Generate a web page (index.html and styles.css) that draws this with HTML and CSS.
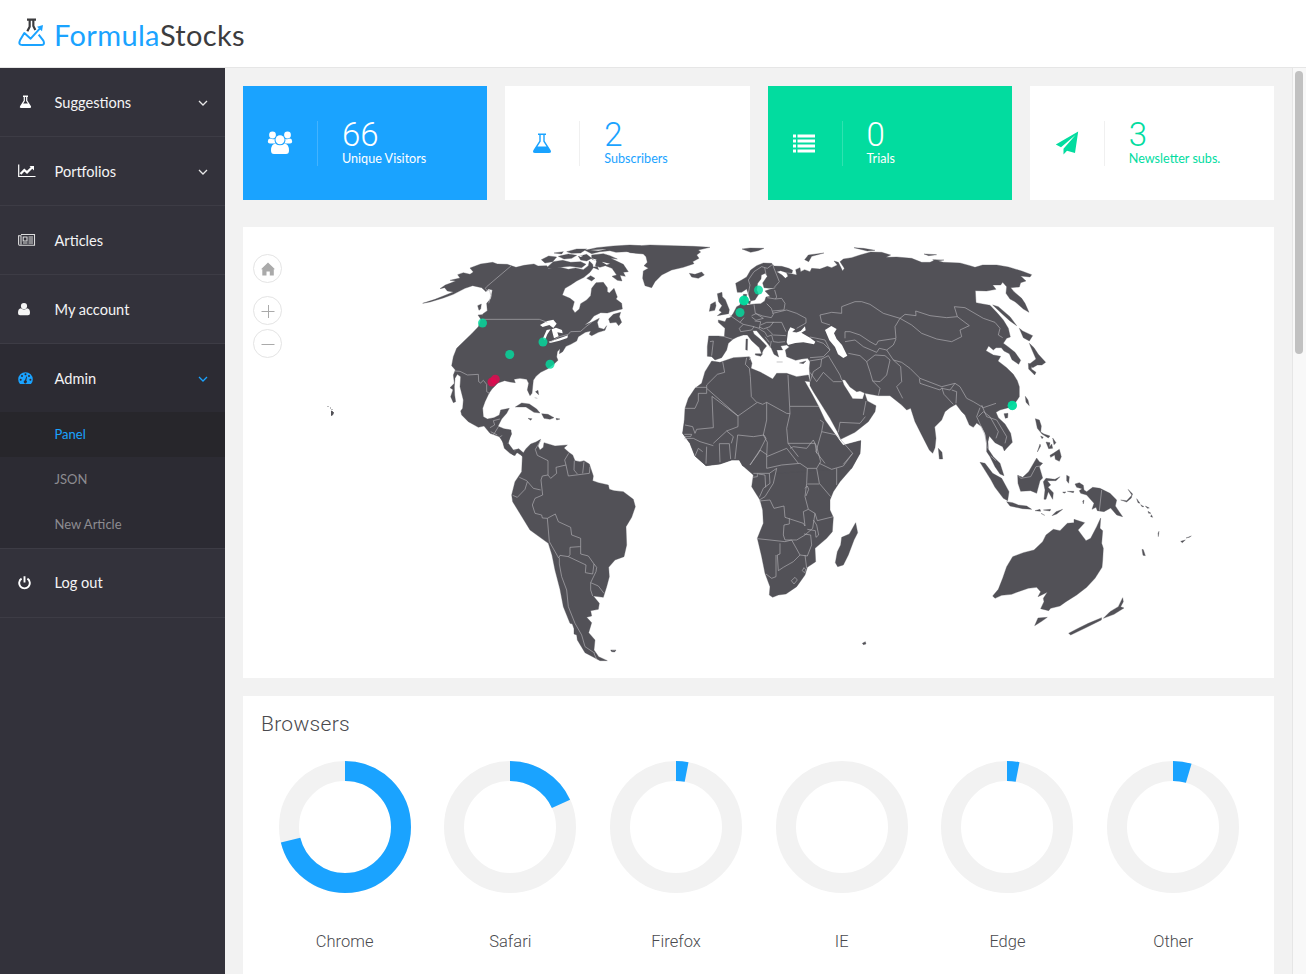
FILE: index.html
```html
<!DOCTYPE html>
<html lang="en">
<head>
<meta charset="utf-8">
<title>FormulaStocks</title>
<link rel="stylesheet" href="styles.css">
</head>
<body>
<header class="topbar">
  <svg class="logo-mark" width="28" height="30" viewBox="54 54 84 90" fill="none" stroke-linejoin="round">
    <path d="M81 59H108M89 59V80L82 94M100 59V78L106 90" stroke="#3c3c3e" stroke-width="6.500"/>
    <path d="M116 104L130 122Q136 135 123 135H67Q54 135 60 121L73 99L92 116L122 83" stroke="#1aa3ff" stroke-width="6"/>
    <path d="M111 80L129 75L126 94Z" fill="#1aa3ff"/>
  </svg>
  <div class="logo-text"><span class="logo-a">Formula</span><span class="logo-b">Stocks</span></div>
</header>
<div class="shell">
  <nav class="sidebar">
    <a class="item"><span class="ico"><svg width="16" height="16" viewBox="0 0 16 16"><path d="M5 1.500h5v1.500H9.300v3.600L13 12.300Q13.600 14 12 14H3Q1.200 14 2 12.300L5.700 6.600V3H5zM6.900 3v4L5.200 9.600h4.700L8.100 7V3z" fill="#fff" fill-rule="evenodd"/></svg></span><span class="name">Suggestions</span><svg class="chev" width="10" height="6" viewBox="0 0 10 6"><path d="M1 1l4 4 4-4"/></svg></a>
    <a class="item"><span class="ico"><svg width="18" height="16" viewBox="0 0 18 16" fill="none"><path d="M.7 1.500V13.500H17.500" stroke="#fff" stroke-width="1.200"/><path d="M2.500 11L6.300 7L9 9.400L14 4.500" stroke="#fff" stroke-width="2.200"/><path d="M11.500 3H16V7.500z" fill="#fff"/></svg></span><span class="name">Portfolios</span><svg class="chev" width="10" height="6" viewBox="0 0 10 6"><path d="M1 1l4 4 4-4"/></svg></a>
    <a class="item"><span class="ico"><svg width="18" height="14" viewBox="0 0 18 14" fill="none" stroke="#ddd"><path d="M3 1.500H16.500V12.200H1.500Q.6 12.200.6 11V2.800H3V11.500" stroke-width="1.100"/><path d="M5.200 4H9V8H5.200zM10.500 4H15M10.500 6H15M10.500 8H15M5 10H9.500M10.500 10H15" stroke-width="1.100"/></svg></span><span class="name">Articles</span></a>
    <a class="item"><span class="ico"><svg width="14" height="16" viewBox="0 0 14 16" fill="#f5f5f5"><circle cx="6" cy="5" r="3.100"/><path d="M3 7.200Q6 9.800 9 7.200Q12 7.500 12 12Q12 14.300 10 14.300H2Q0 14.300 0 12Q0 7.500 3 7.200z"/></svg></span><span class="name">My account</span></a>
    <a class="item open"><span class="ico"><svg width="16" height="16" viewBox="0 0 16 16"><path d="M2 14Q.2 12 .2 9.500A7.300 7.300 0 0 1 14.800 9.500Q14.800 12 13 14z" fill="#1aa3ff"/><g fill="#2c2b33"><circle cx="2.700" cy="9.800" r="1"/><circle cx="4" cy="6" r="1"/><circle cx="7.500" cy="4.300" r="1"/><circle cx="11" cy="6" r="1"/><circle cx="12.400" cy="9.800" r="1"/><path d="M8.300 6.500L9 6.700L8.300 10.500A1.600 1.600 0 1 1 7 10.200z"/></g></svg></span><span class="name">Admin</span><svg class="chev on" width="10" height="6" viewBox="0 0 10 6"><path d="M1 1l4 4 4-4"/></svg></a>
    <div class="submenu">
      <a class="sub current">Panel</a>
      <a class="sub">JSON</a>
      <a class="sub">New Article</a>
    </div>
    <a class="item after"><span class="ico"><svg width="14" height="16" viewBox="0 0 14 16" fill="none" stroke="#fff" stroke-width="1.900"><path d="M3.600 3.600A5.300 5.300 0 1 0 9.400 3.600M6.500 1.300V7.500"/></svg></span><span class="name">Log out</span></a>
  </nav>
  <main class="content">
    <section class="cards">
      <article class="card blue">
        <div class="card-icon"><svg width="26" height="26" viewBox="0 0 26 26" fill="#fff"><circle cx="5.500" cy="5" r="3.400"/><circle cx="20.500" cy="5" r="3.400"/><path d="M3 8.500Q6 10 8 8.800Q7 12 9 13.500H3Q.8 13.500.8 11.500Q1 8.700 3 8.500zM23 8.500Q20 10 18 8.800Q19 12 17 13.500H23Q25.200 13.500 25.200 11.500Q25 8.700 23 8.500z"/><circle cx="13" cy="9.700" r="5.300" fill="#1aa3ff"/><circle cx="13" cy="9.700" r="4.500"/><path d="M8.500 13.700Q13 17 17.500 13.700Q22 14 22 20.500Q22 24 19 24H7Q4 24 4 20.500Q4 14 8.500 13.700z"/></svg></div>
        <div class="card-body"><div class="num">66</div><div class="lbl">Unique Visitors</div></div>
      </article>
      <article class="card white-blue">
        <div class="card-icon"><svg width="20" height="22" viewBox="0 0 20 22"><path d="M6 1.500h8v1.500h-1.300v6L18.500 18Q20 21 17 21H3Q0 21 1.500 18L7.300 9V3H6zM8.700 3v6.500L5.500 14.500h9L11.300 9.500V3z" fill="#1aa3ff" fill-rule="evenodd"/></svg></div>
        <div class="card-body"><div class="num">2</div><div class="lbl">Subscribers</div></div>
      </article>
      <article class="card green">
        <div class="card-icon"><svg width="23" height="19" viewBox="0 0 23 19" fill="#fff"><path d="M0 .500h3v3h-3zM4.500 .500h17.500v3h-17.500zM0 5.600h3v3h-3zM4.500 5.600h17.500v3h-17.500zM0 10.600h3v3h-3zM4.500 10.600h17.500v3h-17.500zM0 15.600h3v3h-3zM4.500 15.600h17.500v3h-17.500z"/></svg></div>
        <div class="card-body"><div class="num">0</div><div class="lbl">Trials</div></div>
      </article>
      <article class="card white-green">
        <div class="card-icon"><svg width="24" height="24" viewBox="0 0 24 24" fill="#02dc9f"><path d="M23.200.500L.8 13.500L6 16.200L20.500 4L8.500 17.800V23.500L12 19.800L20 22z"/></svg></div>
        <div class="card-body"><div class="num">3</div><div class="lbl">Newsletter subs.</div></div>
      </article>
    </section>

    <section class="map">
      <svg class="world" width="1031" height="451" viewBox="243 227 1031 451">
        <!-- North America -->
        <g transform="translate(410 235) scale(.33333)">
          <path class="land" d="M38 205L75 193L100 183L130 171L112 168L104 158L90 161L106 150L120 145L137 138L120 136L150 129L143 119L160 113L180 118L190 111L180 99L212 87L248 82L262 87L292 88L318 97L342 91L372 87L384 93L410 92L416 101L450 97L475 103L497 99L520 104L535 92L538 78L548 88L550 98L540 112L522 127L500 138L482 150L465 160L457 180L480 190L493 200L487 222L495 233L508 222L512 206L530 195L542 182L545 160L558 143L580 142L592 158L592 170L598 174L612 160L622 186L618 192L635 205L637 222L612 228L592 234L572 233L552 243L540 258L524 270L548 260L568 250L562 262L566 278L582 283L590 272L585 286L565 292L545 302L538 298L542 288L526 292L505 305L500 318L482 328L468 334L458 350L448 356L450 341L442 350L440 366L444 376L432 387L412 402L392 412L378 424L370 436L368 455L366 475L360 482L352 465L356 445L350 433L330 430L312 433L316 443L300 441L284 437L264 444L246 462L237 475L225 500L218 520L220 545L232 552L252 548L268 540L272 525L298 520L290 535L275 552L264 574L282 581L303 585L300 605L295 625L310 645L325 642L342 658L338 664L320 652L315 662L300 655L283 640L278 620L268 605L240 595L222 573L205 577L175 560L155 540L152 528L158 520L160 495L150 455L152 425L142 418L135 430L133 455L134 480L137 500L130 503L122 485L129 464L120 458L133 445L130 420L136 405L125 392L130 365L140 340L160 320L185 296L205 275L213 252L218 237L232 227L230 205L243 190L247 165L235 162L228 170L215 158L188 152L165 160L130 178L100 189L60 201Z"/>
          <path class="land" d="M203 212L214 207L212 222L207 226ZM204 240L216 239L222 258L212 252ZM596 252L610 238L632 232L628 245L635 262L626 272L618 262L600 264ZM376 470L384 466L386 480M374 488L382 490M316 516L335 504L358 507L380 522L390 534L372 532L348 516ZM395 536L414 538L432 548L420 553L402 550ZM354 550L366 551L362 556ZM438 550L450 552L440 555Z"/>
          <path class="land" d="M394 74L416 63L440 66L428 80L405 84ZM410 98L430 80L458 76L482 82L512 80L528 88L515 98L480 94L450 97L430 103ZM432 54L460 50L455 57ZM445 64L475 57L500 61L485 70L462 72ZM470 50L500 42L530 42L512 54L484 55ZM505 64L530 58L545 70L530 78L512 75ZM525 46L560 38L610 33L660 30L692 32L692 38L650 40L692 46L692 54L650 50L618 52L600 47L570 50L545 56ZM545 60L580 56L600 62L622 72L602 70L640 88L655 110L640 112L646 124L630 121L636 138L622 136L606 124L620 120L606 100L586 92L570 97L556 92L560 78L545 72ZM548 97L562 94L566 104ZM530 130L542 122L555 130L545 138ZM660 42L690 44L690 54L675 54Z"/>
          <path class="water" d="M390 270L412 258L430 254L440 266L430 279L418 270L398 276ZM399 310L410 285L422 283L412 298L405 316ZM425 283L438 278L456 285L458 295L442 292L446 304L432 310L428 295ZM416 320L440 313L474 301L472 309L448 317L420 324ZM545 70L560 74L556 78ZM575 80L600 86L590 89ZM500 60L520 62L512 66ZM540 45L590 43L565 47ZM575 105L600 110L585 122L570 118Z"/>
          <path class="border" d="M304 92L230 155L226 160L232 168L238 164L243 182L236 205M216 253H388L412 262M420 322L448 305L475 298L482 290L512 289L528 275L545 262M134 408L150 409L172 420L205 418L206 440L212 444L220 436L230 448L230 470L240 476M270 552L250 557L254 570L240 578M250 600L266 574M270 605L300 590M280 625L294 626M242 590L262 600M312 655L316 645"/>
        </g>
        <!-- Southern Africa coast, under the continental borders -->
        <g transform="translate(670 400) scale(.33333)">
          <path class="land" d="M45 60L38 100L60 130L75 168L108 197L150 192L185 180L208 180L218 198L245 200L250 225L245 260L270 300L278 330L280 370L262 415L275 470L285 520L300 560L298 585L308 592L325 585L348 582L380 560L405 525L412 502L437 485L435 445L470 415L487 395L490 352L480 330L480 300L490 275L510 245L545 205L570 160L572 122L520 136L460 60Z"/>
          <path class="land" d="M557 368L563 398L552 420L535 465L520 495L503 500L496 488L502 455L512 435L515 412L538 402ZM577 730L586 725L588 732L580 734Z"/>
        </g>
        <!-- Europe, Asia and northern Africa -->
        <g transform="translate(630 235) scale(.33333)">
          <path class="land" d="M-20 33L30 32L60 30L130 32L190 34L240 37L205 45L212 51L200 60L207 70L188 80L192 86L160 97L125 105L95 120L75 140L65 158L45 152L38 130L40 108L55 100L42 92L52 82L48 65L40 57L0 53L-12 47Z"/>
          <path class="land" d="M178 115L195 118L215 111L223 120L205 130L185 126ZM262 176L276 172L277 185L286 194L298 224L296 236L262 242L275 232L267 226L276 212L266 200ZM242 208L256 200L258 212L254 226L238 229ZM336 42L360 39L402 40L384 47L362 52ZM524 74L535 60L582 54L545 64L536 80ZM672 38L700 40L735 46L712 48ZM882 57L920 59L896 62ZM908 74L942 75L915 79ZM348 312L353 312L352 346L347 344ZM376 356L398 356L392 364L376 360ZM440 381H458M508 384L528 378L520 386ZM340 178L350 178L348 200L340 196ZM354 198L362 198L360 207L354 205Z"/>
          <path class="land" d="M265 255L285 260L290 250L300 248L310 235L320 215L330 210L334 192L344 198L352 210L372 207L392 206L404 198L408 186L420 184L405 168L420 163L440 158L418 160L402 158L398 144L412 124L406 115L394 120L393 132L383 145L380 165L386 178L375 195L362 198L356 180L350 162L335 172L322 172L317 145L335 135L350 126L362 105L380 92L400 84L425 85L432 93L455 94L476 100L488 106L486 114L470 113L452 107L440 110L456 120L466 130L474 124L470 114L484 116L500 120L497 104L510 98L512 110L524 104L540 110L545 100L570 102L592 94L605 98L622 90L612 78L625 82L638 108L643 100L630 80L640 72L665 68L690 60L722 51L755 52L782 60L768 67L800 66L845 70L875 82L900 82L915 75L940 82L990 84L1020 92L1035 97L1058 90L1100 90L1135 96L1175 108L1205 119L1200 126L1172 123L1188 138L1172 143L1168 156L1142 158L1152 170L1175 190L1185 205L1197 232L1180 222L1155 200L1140 192L1128 175L1130 155L1118 142L1112 150L1088 150L1098 163L1070 168L1036 167L1038 203L1058 207L1080 211L1100 232L1120 255L1135 280L1141 306L1130 310L1120 325L1134 335L1155 352L1172 376L1166 388L1146 374L1138 356L1122 348L1114 338L1098 338L1090 345L1076 333L1068 347L1090 360L1112 364L1104 378L1130 398L1150 418L1162 437L1168 455L1168 485L1158 500L1135 518L1110 525L1098 532L1105 548L1125 567L1142 595L1147 622L1130 640L1123 648L1118 635L1095 623L1078 603L1074 620L1075 643L1090 665L1110 685L1122 722L1110 717L1095 695L1080 665L1070 650L1070 625L1065 595L1055 575L1040 564L1030 577L1018 570L1005 540L995 530L978 508L960 518L945 530L935 555L914 576L918 610L915 638L908 655L898 645L875 600L855 560L842 520L830 525L815 510L800 498L780 482L745 482L705 475L690 468L680 470L660 456L645 435L636 434L642 450L656 472L668 491L698 492L704 474L712 498L738 512L735 530L715 560L675 592L632 613L622 590L600 550L575 510L550 470L540 452L540 430L538 400L540 380L533 370L515 372L497 376L470 365L466 345L478 336L470 330L452 333L458 345L440 345L446 366L432 358L424 340L410 322L395 305L380 287L368 287L372 297L390 312L410 333L400 345L395 357L388 338L365 317L352 300L340 300L322 306L310 312L295 325L290 345L275 368L255 375L245 365L232 364L232 335L236 303L265 303L283 305L285 280L265 262Z"/>
          <path class="water" d="M470 322L474 290L481 277L494 282L500 291L512 288L525 274L527 286L514 293L540 308L556 320L552 328L520 322L496 324L474 330ZM585 285L604 273L620 282L612 295L620 312L636 330L652 362L640 369L624 358L615 336L598 316Z"/>
          <path class="land" d="M488 290L500 280L508 288L500 292ZM1088 210L1105 215L1140 245L1160 272L1140 258L1120 240ZM1168 280L1178 288L1208 302L1198 318L1180 308ZM1198 325L1212 338L1225 358L1247 382L1236 390L1222 390L1208 398L1200 386L1218 372L1204 340ZM1195 385L1206 388L1204 402L1218 412L1214 420L1196 402ZM925 640L936 652L938 672L928 672ZM1186 484L1194 495L1198 512L1188 502ZM1122 536L1134 535L1133 548L1126 550Z"/>
          <path class="land" d="M245 378L270 382L310 368L358 365L366 385L363 400L392 412L428 432L440 415L470 415L500 425L535 420L540 440L524 438L545 475L565 512L585 555L610 590L624 610L636 632L692 617L690 655L665 700L370 720L338 692L328 675L305 675L270 687L228 692L195 663L180 625L158 595L163 555L165 520L175 490L195 460L215 445L225 410Z"/>
          <path class="border" d="M354 180L360 150L355 135L372 110L395 95L412 100L428 88L432 100L448 140L432 158M404 98L408 118M372 208L376 235L398 243L424 248L430 238L424 220L410 206M412 188L436 192L440 186L434 165M436 192L455 190L465 205L462 225L428 228M428 235L470 225L500 235L528 250V264L500 280M298 240L330 262L342 248M330 262L340 268L328 280L332 290L365 285L372 275L340 268M365 242L378 236L400 250L378 256L365 246M374 258L392 260L388 280L370 275M392 270L410 262L430 262L420 275L400 282L388 276M428 262L455 262L468 290M410 280L430 300L468 302M388 282L405 292L412 305L425 300L430 320L445 322L465 320M424 318L420 338M405 305L418 322M283 305L308 313M240 320L250 318L245 362M362 366L358 375M350 368L346 388L358 400L361 425L364 485L380 502M278 380L284 412L262 418L230 450V460L324 543L382 502L398 508L410 502L470 535L480 536L474 420M230 457H196M230 460V475H205V498L195 520H165M246 484L250 578L200 583L195 595M246 484L324 543V575L290 588L250 625M410 502V555L400 600L412 622L410 665M480 514H568M480 536L470 580L474 625L505 665M323 600L370 605L402 600L408 610L385 655L360 690M323 600L315 672M290 588L310 605L304 625M268 626H298L302 672M268 626L270 682M230 635L228 686M195 595L188 575L165 570M163 598H185L182 605H163M163 611L190 610L210 620L250 632M195 663L205 640L218 650M575 590L580 562L570 555M575 590L558 650L585 685M575 590L620 600L668 655L640 688M474 625L555 625L560 655M538 378L575 372L572 395L550 410L540 440M540 412L560 440L580 412L610 440L635 440M575 372L595 362L630 420L635 435M625 592L630 562L690 565L706 545M700 540L708 498M540 368L580 365L600 345L580 325L560 318M540 306L585 315L600 345M570 240L605 232L635 235L635 215L675 200L695 200L720 208L760 235L810 250L825 238L858 242L857 228L900 242L950 248L982 245L973 215L1005 218L1060 250L1095 262L1110 280L1105 300L1118 308M810 250L845 270L875 295L920 312L965 320L995 305L990 285L1018 272L982 245M810 250L795 275L798 310L745 318L738 330L720 320L690 300L660 290L645 290L645 310M570 240L575 262L600 270M645 320L675 315L700 335L740 352L748 340L770 345L790 330L798 312M655 355L690 362L710 380L735 360L765 362L780 375L770 420L750 440L728 438L720 410L710 380M728 438L750 460L745 482M770 345L790 375L815 382L840 400L870 430L935 455L975 445L990 455L1010 490L1030 500L1060 518L1098 505M790 375L812 395L815 440L800 455L818 490M868 430L870 445L930 465L936 458M936 460L942 478L970 508M965 465L980 470L978 505M935 460L960 465L975 445M1050 518L1040 545L1065 600L1072 640M1055 510L1070 545L1100 555L1130 605L1125 625M1045 545L1060 530L1080 545L1105 590L1098 610"/>
        </g>
        <!-- Central and southern Africa borders -->
        <g transform="translate(670 400) scale(.33333)">
          <path class="border" d="M250 220H298L320 205M298 220L300 250L280 265L268 292M320 205L310 250L285 290L268 300M268 303L300 300L312 325L342 318L345 352L400 370L405 378L400 335L415 328L405 290L410 250L412 205L390 190L335 195L290 205L290 170L350 145L385 190M360 145L370 140L410 145L430 120L440 140L452 185L440 205L412 205M440 205L448 250L482 290M412 252L448 252M448 190L485 208L520 198L548 160M500 205V255M415 328L435 340L442 362L490 350M435 340L428 385L405 405L380 420L345 420L340 405L342 375L358 372V355M430 360L440 375L446 405L438 412L436 392L412 388M262 416L300 420L345 425L365 420L390 465L370 485L340 502L325 512L322 465L330 462V430M318 530V465M288 522L305 535L318 530M390 465L412 468L425 435L422 405L402 402M405 465L410 505M397 512L402 503L408 510L403 518ZM364 542L375 532L382 540L372 552ZM405 265L412 258L416 268L408 288M248 232L262 230V220M265 222L285 225L287 262M270 150L292 165M240 195L270 150"/>
        </g>
        <!-- South America -->
        <g transform="translate(480 430) scale(.33333)">
          <path class="land" d="M92 0L95 12L82 40L100 66L116 56L130 68L138 56L152 42L168 36L182 28L174 48L180 60L190 52L192 38L225 48L262 45L252 54L268 68L278 75L285 92L300 95L312 92L328 102L340 138L338 152L355 158L385 165L388 178L402 182L430 185L460 208L466 230L455 262L438 290L440 345L432 380L405 390L386 412L388 440L380 470L370 502L340 498L358 520L355 538L332 542L335 558L320 562L335 578L326 608L345 630L342 660L356 680L382 692L360 692L345 684L315 668L292 630L290 615L282 612L282 596L277 582L270 580L250 530L240 478L225 420L216 375L205 340L150 300L98 215L95 195L105 155L125 125L127 80L118 64L100 76L75 52L66 30L68 0ZM392 660L408 660L404 666L395 665Z"/>
          <path class="border" d="M182 32L166 58L172 76L204 92V135L212 145L230 130L228 112L258 105L254 90L266 70M258 105L265 138L328 130M283 92L282 120L292 132M312 95L308 130M328 130L330 110M204 135L187 138L183 150L188 195L165 205L157 225L165 250L185 255L187 264L202 265L205 300L208 335L236 384L240 376L265 380L270 374V352L298 350L302 350V325L275 315L272 292L235 275L226 252L202 265M118 142L140 152L160 175L182 180M142 155L135 178L112 202L98 196M265 380L318 405L316 428L338 432L342 402L325 378L302 372V350M238 384V402L245 440L260 480L265 530L285 580L305 615L315 650L345 670M342 402L350 412L348 425L332 458V480L338 498M332 458L355 468L372 490M342 670L350 688"/>
        </g>
        <!-- South-east Asia and Oceania -->
        <g transform="translate(960 400) scale(.33333)">
          <path class="land" d="M60 187L75 190L98 220L125 235L147 275L143 302L130 295L105 262L92 238ZM140 305L158 308L175 315L200 318L215 328L188 326L150 318ZM225 332L240 328L242 334ZM250 330L272 328L270 333ZM243 340L254 346ZM276 347L288 335L308 328L290 342ZM173 226L188 232L206 215L230 174L238 185L248 190L238 200L248 234L240 242L230 280L212 272L182 274L174 250ZM250 245L258 235L285 238L300 230L288 242L262 242L272 255L264 262L280 278L278 298L265 275L258 298L252 298L255 270ZM320 226L328 230L326 250L320 242ZM308 276H318L312 280ZM322 274L342 274L340 278ZM368 303L372 300L370 312ZM226 56L238 60L244 78L242 96L252 102L270 108L265 114L246 102L232 85ZM242 108L250 112L246 116ZM258 126L270 128L268 142L275 132L278 145L266 146ZM278 114L288 128L282 134ZM270 166L280 160L298 148L304 170L298 184L286 178L284 165L272 172ZM240 132L242 138L232 156ZM345 252L358 248L370 256L372 270L380 275L398 262L420 265L450 280L470 300L466 318L478 336L488 350L470 345L452 324L432 335L412 332L408 322L396 328L402 310L380 285L362 280L358 272L366 266L350 262ZM482 300L500 302L516 285L514 294L500 306ZM504 268L518 282L516 286ZM530 296L540 310L534 308ZM542 314L552 320L546 320ZM556 318L568 324L562 325ZM564 334L573 340L566 340ZM574 344L578 352L572 350Z"/>
          <path class="land" d="M422 354L420 385L428 392L425 430L430 445L428 480L426 502L405 535L380 562L350 585L318 605L300 618L272 625L266 632L242 626L252 605L250 595L262 577L234 590L242 575L230 562L205 565L175 575L155 583L125 586L105 595L98 588L115 568L128 535L140 500L158 470L190 458L222 450L248 425L258 405L280 388L300 392L322 370L342 368L342 358L374 368L354 390L378 422L392 415L410 380ZM234 654L262 652L245 664L224 677ZM326 700L352 686L385 670L425 653L424 660L380 682L332 705ZM430 655L450 635L475 620L488 593L490 605L482 620L492 624L462 643ZM546 448L550 449L556 467L549 466ZM594 400L597 394L595 410ZM662 424L676 420L667 428ZM678 414L694 408L688 412Z"/>
          <path class="border" d="M176 228L182 235L212 230L228 200L242 198M425 270L418 332M92 168L108 182"/>
        </g>
        <path class="land" d="M331.500 411L333.500 412.500L332.500 415L331.500 415.500Z"/>
        <path class="specks" d="M327.500 406.500h1M330 408h1M331.500 409.500h1M612 650.500h4"/>
        <g class="pin">
          <circle cx="482.500" cy="323" r="4.500"/><circle cx="543" cy="342" r="4.500"/><circle cx="509.700" cy="354.500" r="4.500"/><circle cx="550" cy="364.300" r="4.500"/>
          <circle cx="744" cy="300.500" r="5"/><circle cx="744" cy="300.500" r="4.500"/><circle cx="758.500" cy="290" r="4.500"/><circle cx="740" cy="312.500" r="4.500"/><circle cx="1012.300" cy="405.500" r="4.700"/><circle cx="1012.300" cy="405.500" r="4.500"/>
        </g>
        <g class="pin hot"><circle cx="492" cy="382" r="4.500"/><circle cx="495.300" cy="379.300" r="4.500"/></g>
      </svg>
      <div class="map-tools">
        <button class="tool home"><svg width="14" height="14" viewBox="0 0 14 14"><path d="M7 .500L14 7.300H12.800V13.500H8.800V9.500H5.500V13.500H1.300V7.300H0z" fill="#aaa"/></svg></button>
        <button class="tool"><svg width="14" height="14" viewBox="0 0 14 14"><path d="M.5 7.500H13.500M7.500 1V14" stroke="#aaa"/></svg></button>
        <button class="tool"><svg width="14" height="14" viewBox="0 0 14 14"><path d="M.5 7.500H13.500" stroke="#aaa"/></svg></button>
      </div>
    </section>

    <section class="browsers">
      <h2>Browsers</h2>
      <div class="rings">
        <div class="ring"><svg width="132" height="132" viewBox="0 0 132 132"><circle class="track" cx="66" cy="66" r="56"/><circle class="value" cx="66" cy="66" r="56" pathLength="100" stroke-dasharray="71.200 100"/></svg><span>Chrome</span></div>
        <div class="ring"><svg width="132" height="132" viewBox="0 0 132 132"><circle class="track" cx="66" cy="66" r="56"/><circle class="value" cx="66" cy="66" r="56" pathLength="100" stroke-dasharray="18.200 100"/></svg><span>Safari</span></div>
        <div class="ring"><svg width="132" height="132" viewBox="0 0 132 132"><circle class="track" cx="66" cy="66" r="56"/><circle class="value" cx="66" cy="66" r="56" pathLength="100" stroke-dasharray="3.030 100"/></svg><span>Firefox</span></div>
        <div class="ring"><svg width="132" height="132" viewBox="0 0 132 132"><circle class="track" cx="66" cy="66" r="56"/></svg><span>IE</span></div>
        <div class="ring"><svg width="132" height="132" viewBox="0 0 132 132"><circle class="track" cx="66" cy="66" r="56"/><circle class="value" cx="66" cy="66" r="56" pathLength="100" stroke-dasharray="3.030 100"/></svg><span>Edge</span></div>
        <div class="ring"><svg width="132" height="132" viewBox="0 0 132 132"><circle class="track" cx="66" cy="66" r="56"/><circle class="value" cx="66" cy="66" r="56" pathLength="100" stroke-dasharray="4.550 100"/></svg><span>Other</span></div>
      </div>
    </section>
  </main>
  <div class="scroll"><div class="thumb"></div></div>
</div>
</body>
</html>
```
FILE: styles.css
```css
* { box-sizing: border-box; }
html, body { margin: 0; height: 100%; }
body {
  display: flex;
  flex-direction: column;
  height: 974px;
  overflow: hidden;
  font-family: Lato, "Liberation Sans", sans-serif;
  color: #4a4a4e;
  background: #f2f2f2;
}
svg { display: block; flex: none; }

.topbar {
  flex: none;
  height: 68px;
  padding-left: 18px;
  display: flex;
  align-items: center;
  gap: 8px;
  background: #fff;
  border-bottom: 1px solid #e6e6e6;
}
.logo-mark { margin-bottom: 2px; }
.logo-text { display: flex; font-size: 29px; line-height: 34px; padding-top: 2px; letter-spacing: .35px; }
.logo-a { color: #1aa3ff; }
.logo-b { color: #3c3c3e; }

.shell { flex: 1; min-height: 0; display: flex; }

.sidebar { flex: none; width: 225px; background: #33323b; color: #f4f4f5; }
.item {
  display: flex;
  align-items: center;
  height: 69px;
  padding: 0 18px;
  border-bottom: 1px solid #3d3c45;
  font-size: 14.6px;
}
.ico { width: 36.5px; display: flex; align-items: center; }
.name { flex: 1; }
.chev { fill: none; stroke: #e8e8e8; stroke-width: 1.3; margin: 2px -0.5px 0 0; }
.chev.on { stroke: #1aa3ff; }
.open { height: 68px; background: #2c2b33; border-bottom: 0; }
.submenu { background: #2c2b33; border-bottom: 1px solid #3d3c45; }
.sub {
  display: flex;
  align-items: center;
  height: 45.3px;
  padding: 0 0 2px 54.5px;
  font-size: 13px;
  color: #8d8c91;
}
.current { color: #1aa3ff; background: #27262b; }

.content { flex: 1; min-width: 0; padding: 18px 18px 0; display: flex; flex-direction: column; }
.cards { flex: none; display: grid; grid-template-columns: repeat(4, 1fr); gap: 18px; height: 114px; margin-bottom: 27px; }
.card { display: flex; align-items: center; background: #fff; }
.card-icon {
  width: 75px;
  height: 45px;
  display: flex;
  align-items: center;
  justify-content: center;
  border-right: 1px solid #f0f0f0;
}
.card-body { padding-left: 24px; }
.num { font-family: Roboto, Lato, sans-serif; font-size: 33px; line-height: 32px; font-weight: 300; }
.lbl { font-size: 12.6px; line-height: 16px; }
.blue { background: #1aa3ff; color: #fff; }
.blue .card-icon, .green .card-icon { border-color: rgba(255, 255, 255, .18); }
.white-blue { color: #1aa3ff; }
.green { background: #02dc9f; color: #fff; }
.white-green { color: #02dc9f; }

.map { flex: none; position: relative; height: 451px; background: #fff; margin-bottom: 18px; }
.land { fill: #525157; stroke: #525157; stroke-width: 1; }
.water { fill: #fff; }
.border { fill: none; stroke: #b4b3b7; stroke-width: 1.9; stroke-linejoin: round; }
.specks { fill: none; stroke: #77767b; stroke-width: 1; }
.pin { fill: #02dc9f; fill-opacity: .82; }
.hot { fill: #e3094f; }
.map-tools { position: absolute; left: 10px; top: 27px; display: flex; flex-direction: column; gap: 4px; }
.tool {
  width: 29px;
  height: 29px;
  padding: 0;
  display: flex;
  align-items: center;
  justify-content: center;
  border: 1px solid #e4e4e4;
  border-radius: 50%;
  background: #fff;
}
.home { margin-bottom: 9px; }

.browsers { flex: 1; min-height: 0; padding: 14px 18px 0; background: #fff; }
.browsers h2 {
  margin: 0 0 23px;
  font-family: Roboto, Lato, sans-serif;
  font-size: 21px;
  line-height: 28px;
  font-weight: 300;
  letter-spacing: .3px;
}
.rings { display: grid; grid-template-columns: repeat(6, 1fr); padding-left: .8px; }
.ring {
  display: flex;
  flex-direction: column;
  align-items: center;
  gap: 37px;
  font-family: Roboto, Lato, sans-serif;
  font-size: 16.5px;
  line-height: 24px;
  font-weight: 300;
}
.track { fill: none; stroke: #f2f2f2; stroke-width: 20; }
.value { fill: none; stroke: #1aa3ff; stroke-width: 20; transform: rotate(-90deg); transform-origin: 66px 66px; }

.scroll { flex: none; width: 14px; padding: 3px 2px; background: #f8f8f8; border-left: 1px solid #e6e6e6; }
.thumb { width: 8px; height: 283px; border-radius: 4px; background: #c1c1c1; }
```
